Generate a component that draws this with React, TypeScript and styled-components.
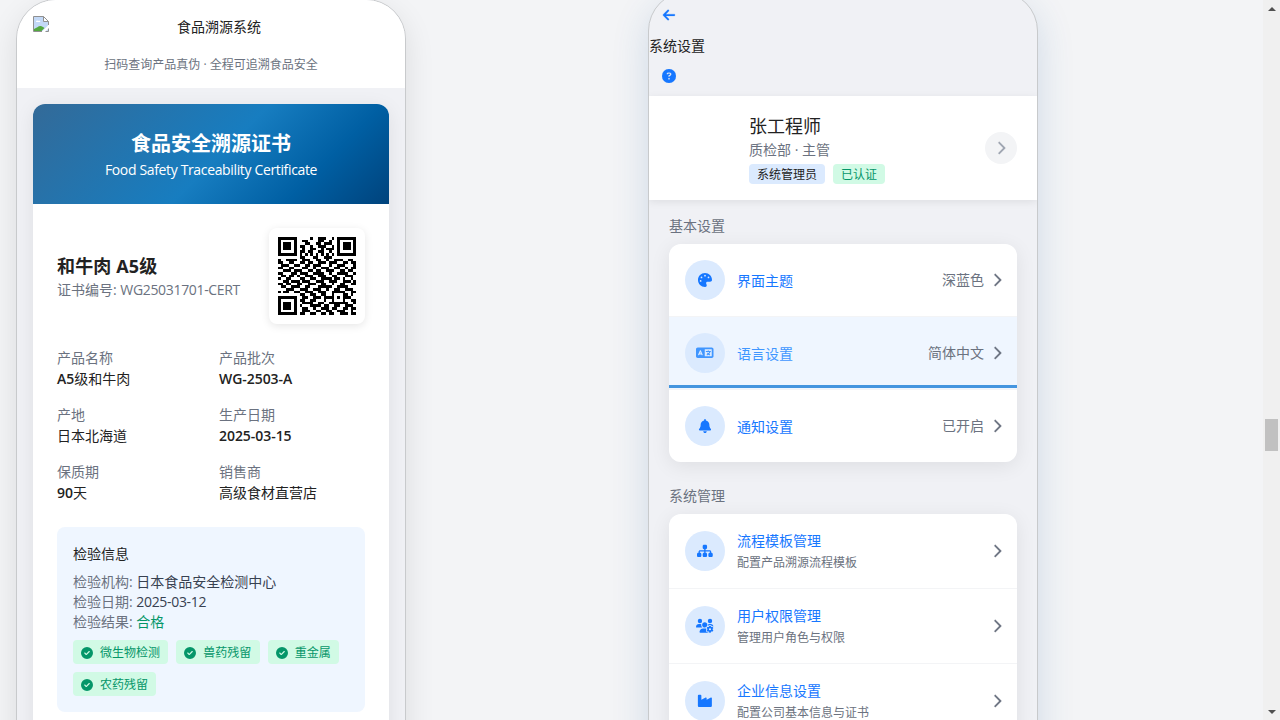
import React from 'react';
import styled, { createGlobalStyle, css } from 'styled-components';
import {
  FaArrowLeft, FaBell, FaChevronRight, FaCircleCheck, FaCircleQuestion,
  FaIndustry, FaLanguage, FaPalette, FaSitemap, FaUsersGear,
} from 'react-icons/fa6';

const GlobalStyle = createGlobalStyle`
  *, *::before, *::after { box-sizing: border-box; }
  html, body { margin: 0; height: 720px; overflow: hidden; }
  body {
    background: #f3f4f6;
    color: #222;
    font: 14px/20px "Open Sans", "Noto Sans CJK SC", sans-serif;
  }
  svg { display: block; flex: none; }
`;

const Page = styled.div`
  display: flex;
  height: 720px;
  overflow: hidden;
`;

const Canvas = styled.main`
  flex: 1;
  display: flex;
  align-items: flex-start;
  gap: 242px;
  padding-left: 16px;
  overflow: hidden;
`;

const Phone = styled.section<{ $lift: number; $active?: boolean }>`
  flex: none;
  width: 390px;
  height: 844px;
  margin-top: ${(p) => -p.$lift}px;
  overflow: hidden;
  border: 1px solid #c8cacc;
  border-radius: 40px;
  background: #f0f1f5;
  box-shadow: ${(p) => (p.$active
    ? '0 12px 36px rgba(35, 95, 160, 0.17)'
    : '0 10px 30px rgba(0, 0, 0, 0.1)')};
`;

const BrandHeader = styled.header`
  height: 88px;
  padding: 16px 16px 0;
  background: #fff;
`;

const BrandRow = styled.div`
  display: flex;
  height: 22px;
  margin-bottom: 17px;
`;

const BrandTitle = styled.div`
  flex: 1;
  text-align: center;
  line-height: 22px;
`;

const BrandHint = styled.div`
  text-align: center;
  font-size: 12px;
  line-height: 20px;
  color: #6b7280;
`;

const CertificateShade = styled.div`
  margin: 16px 16px 0;
  border-radius: 12px;
  box-shadow: 0 4px 20px rgba(0, 0, 0, 0.08);
`;

const Certificate = styled.article`
  height: 760px;
  overflow: hidden;
  border-radius: 12px;
  background: #fff;
`;

const Banner = styled.header`
  height: 100px;
  padding-top: 25px;
  text-align: center;
  color: #fff;
  background: linear-gradient(135deg, #336a98 0%, #177dc0 52%, #005fa3 77%, #00437c 100%);
`;

const BannerTitle = styled.h2`
  margin: 0;
  font-size: 20px;
  line-height: 29px;
  font-weight: 700;
`;

const BannerSub = styled.div`
  line-height: 24px;
  letter-spacing: -0.35px;
`;

const CertBody = styled.div`
  padding: 24px;
`;

const ProductRow = styled.div`
  display: flex;
  align-items: center;
  justify-content: space-between;
  height: 96px;
  margin-bottom: 24px;
`;

const ProductName = styled.h3`
  margin: 0;
  font-size: 18px;
  line-height: 28px;
  font-weight: 700;
  letter-spacing: 0.15px;
`;

const Muted = styled.span`
  color: #6b7280;
`;

const Latin = styled.span<{ $strong?: boolean }>`
  letter-spacing: -0.33px;
  ${(p) => p.$strong && css`
    font-weight: 600;
    letter-spacing: -0.05px;
  `}
`;

const QrFrame = styled.div`
  width: 96px;
  height: 96px;
  padding: 9px;
  border-radius: 8px;
  background: #fff;
  box-shadow: 0 2px 8px rgba(0, 0, 0, 0.1);
`;

const Facts = styled.dl`
  display: grid;
  grid-template-columns: 1fr 1fr;
  gap: 16px;
  margin: 0 0 24px;
`;

const Fact = styled.div`
  dt { line-height: 20px; color: #6b7280; }
  dd { margin: 0; line-height: 21px; }
`;

const Inspection = styled.section`
  height: 185px;
  padding: 16px;
  border-radius: 8px;
  background: #eff6ff;
`;

const InspectionTitle = styled.div`
  margin-bottom: 8px;
  line-height: 21px;
`;

const InspectionLine = styled.div<{ $ok?: boolean }>`
  color: ${(p) => (p.$ok ? '#059669' : '#374151')};
`;

const Checks = styled.div`
  display: flex;
  flex-wrap: wrap;
  gap: 8px;
  margin-top: 8px;
`;

const Check = styled.span`
  display: inline-flex;
  align-items: center;
  gap: 7px;
  height: 24px;
  padding: 1px 8.3px 0 8px;
  border-radius: 4px;
  background: #d1fae5;
  color: #059669;
  font-size: 12px;
  svg { width: 12px; height: 12px; }
`;

const NavIcon = styled.div`
  display: flex;
  align-items: center;
  justify-content: center;
  width: 40px;
  height: 32px;
  color: #1677ff;
  svg {
    width: 14px;
    height: 14px;
    stroke: currentColor;
    stroke-width: 8;
  }
`;

const NavBar = styled.header`
  height: 104px;
  padding-top: 7px;
`;

const NavTitle = styled.div`
  height: 29px;
  line-height: 30px;
`;

const Profile = styled.section`
  position: relative;
  display: flex;
  align-items: center;
  height: 104px;
  padding: 16px 20px;
  background: #fff;
  box-shadow: 0 2px 8px rgba(0, 0, 0, 0.08);
`;

const Avatar = styled.div`
  width: 64px;
  height: 64px;
  margin-right: 16px;
`;

const ProfileInfo = styled.div`
  flex: 1;
`;

const ProfileName = styled.div`
  font-size: 18px;
  line-height: 28px;
`;

const Badges = styled.div`
  display: flex;
  gap: 8px;
  margin-top: 4px;
`;

const Badge = styled.span<{ $green?: boolean }>`
  height: 20px;
  padding: 1px 8px 0;
  border-radius: 4px;
  font-size: 12px;
  line-height: 19px;
  background: ${(p) => (p.$green ? '#d1fae5' : '#dbeafe')};
  color: ${(p) => (p.$green ? '#059669' : '#222')};
`;

const RoundButton = styled.button`
  display: flex;
  align-items: center;
  justify-content: center;
  width: 32px;
  height: 32px;
  padding: 0;
  border: 0;
  border-radius: 50%;
  background: #f3f4f6;
  color: #9ca3af;
  svg {
    width: 14px;
    height: 14px;
    stroke: currentColor;
    stroke-width: 8;
  }
`;

const Group = styled.section`
  padding: 16px 20px 8px;
`;

const GroupTitle = styled.div`
  margin-bottom: 8px;
  color: #6b7280;
`;

const CardShade = styled.div`
  border-radius: 12px;
  box-shadow: 0 4px 20px rgba(0, 0, 0, 0.08);
`;

const Card = styled.div`
  border-radius: 12px;
  overflow: hidden;
  background: #fff;
`;

const Row = styled.div<{ $tall?: boolean; $selected?: boolean }>`
  position: relative;
  display: flex;
  align-items: center;
  height: ${(p) => (p.$tall ? 75 : 73)}px;
  padding: 0 16px;
  border-bottom: 1px solid #f3f4f6;
  color: #6b7280;
  &:last-child {
    height: ${(p) => (p.$tall ? 74 : 72)}px;
    border-bottom: 0;
  }
  ${(p) => p.$selected && css`
    background: #eff6ff;
    &::after {
      content: '';
      position: absolute;
      left: 0;
      right: 0;
      bottom: 1px;
      height: 3px;
      background: #4495df;
    }
  `}
`;

const RowIcon = styled.div<{ $dim?: boolean; $size: number }>`
  display: flex;
  align-items: center;
  justify-content: center;
  width: 40px;
  height: 40px;
  margin-right: 12px;
  border-radius: 50%;
  background: #dbeafe;
  color: ${(p) => (p.$dim ? '#4096ff' : '#1677ff')};
  svg {
    width: ${(p) => p.$size}px;
    height: ${(p) => p.$size}px;
  }
`;

const RowText = styled.div<{ $single?: boolean }>`
  flex: 1;
  padding-top: ${(p) => (p.$single ? 1 : 0)}px;
`;

const RowTitle = styled.div<{ $dim?: boolean }>`
  line-height: 21px;
  color: ${(p) => (p.$dim ? '#4096ff' : '#1677ff')};
`;

const RowNote = styled.div`
  padding-top: 1px;
  font-size: 12px;
  line-height: 21px;
`;

const RowArrow = styled.span`
  display: flex;
  justify-content: center;
  width: 9px;
  margin-left: 8px;
  svg {
    width: 14px;
    height: 14px;
    stroke: currentColor;
    stroke-width: 8;
  }
`;

const ScrollTrack = styled.aside`
  flex: none;
  display: flex;
  flex-direction: column;
  align-items: center;
  justify-content: space-between;
  width: 17px;
  height: 720px;
  padding: 7px 0 6px;
  background: #f0f0f0;
`;

const ScrollArrow = styled.i<{ $down?: boolean }>`
  width: 0;
  height: 0;
  border: 4px solid transparent;
  border-top: ${(p) => (p.$down ? '4px solid #505050' : '0')};
  border-bottom: ${(p) => (p.$down ? '0' : '4px solid #505050')};
`;

const ScrollThumb = styled.div`
  width: 13px;
  height: 32px;
  margin-top: 408px;
  margin-bottom: auto;
  background: #c1c1c1;
`;

const QR_ROWS = [
  '11111110000010011100101111111',
  '10000010011000011001001000001',
  '10111010001100110111001011101',
  '10111010110010011100101011101',
  '10111010010011001011101011101',
  '10000010110110011001001000001',
  '11111110101010101010101111111',
  '00000000110001100111000000000',
  '10011110011100110010011100110',
  '11001100110110011101110011011',
  '01110011001101110001001110001',
  '11001100011001001110011001011',
  '00111011100110110011100110110',
  '11000110111001111001001111001',
  '01101101001110011100110001110',
  '10011000110011001111011010010',
  '00110111011100111001110011101',
  '11011001100111001100100110011',
  '01100111001100011111001111000',
  '00011100111001110010011001110',
  '10110011001110011100111110011',
  '00000000110011001100100011010',
  '11111110011001110111101011100',
  '10000010110011000100100010011',
  '10111010011110011001111111001',
  '10111010100011110110011001110',
  '10111010011001001110110011011',
  '10000010011100110011001110010',
  '11111110110011001101100111011',
];

function QrCode() {
  return (
    <svg width="78" height="78" viewBox="0 0 29 29" shapeRendering="crispEdges">
      {QR_ROWS.map((row, y) => [...row].map((cell, x) => (
        cell === '1' ? <rect key={`${x}-${y}`} x={x} y={y} width="1" height="1" /> : null
      )))}
    </svg>
  );
}

function MissingImage() {
  return (
    <svg width="16" height="16" viewBox="0 0 16 16">
      <path d="M.5.5h10l5 5v10H.5z" fill="#c3d9f7" />
      <path d="M3 6c0-1.5 1.5-2 2.2-1 1.2-.6 2.2 0 2.1 1z" fill="#fff" />
      <path d="M1 15v-2c3-1 4-3 6.5-3 1.5 0 2.5 1 4 2l-3 3z" fill="#53a93f" />
      <path d="M8.5 16 16 8.5V12l-4 4z" fill="#fff" />
      <path d="M10.5.5v5h5" fill="#fff" stroke="#909090" />
      <path d="M9 15.5H.5V.5h10l5 5V9M12.5 15.5h3v-3" fill="none" stroke="#909090" />
    </svg>
  );
}

const facts: { label: string; value: React.ReactNode }[] = [
  { label: '产品名称', value: <><Latin $strong>A5</Latin>级和牛肉</> },
  { label: '产品批次', value: <Latin $strong>WG-2503-A</Latin> },
  { label: '产地', value: '日本北海道' },
  { label: '生产日期', value: <Latin $strong>2025-03-15</Latin> },
  { label: '保质期', value: <><Latin $strong>90</Latin>天</> },
  { label: '销售商', value: '高级食材直营店' },
];

const checks = ['微生物检测', '兽药残留', '重金属', '农药残留'];

const basics = [
  { icon: <FaPalette />, size: 14, title: '界面主题', value: '深蓝色' },
  { icon: <FaLanguage />, size: 17.5, title: '语言设置', value: '简体中文', selected: true },
  { icon: <FaBell />, size: 14, title: '通知设置', value: '已开启' },
];

const management = [
  { icon: <FaSitemap />, size: 15.75, title: '流程模板管理', note: '配置产品溯源流程模板' },
  { icon: <FaUsersGear />, size: 17.5, title: '用户权限管理', note: '管理用户角色与权限' },
  { icon: <FaIndustry />, size: 15.75, title: '企业信息设置', note: '配置公司基本信息与证书' },
];

function TracePhone() {
  return (
    <Phone $lift={1}>
      <BrandHeader>
        <BrandRow>
          <MissingImage />
          <BrandTitle>食品溯源系统</BrandTitle>
        </BrandRow>
        <BrandHint>扫码查询产品真伪 · 全程可追溯食品安全</BrandHint>
      </BrandHeader>
      <CertificateShade>
        <Certificate>
          <Banner>
            <BannerTitle>食品安全溯源证书</BannerTitle>
            <BannerSub>Food Safety Traceability Certificate</BannerSub>
          </Banner>
          <CertBody>
            <ProductRow>
              <div>
                <ProductName>和牛肉 A5级</ProductName>
                <Muted>证书编号: <Latin>WG25031701-CERT</Latin></Muted>
              </div>
              <QrFrame><QrCode /></QrFrame>
            </ProductRow>
            <Facts>
              {facts.map((f) => (
                <Fact key={f.label}><dt>{f.label}</dt><dd>{f.value}</dd></Fact>
              ))}
            </Facts>
            <Inspection>
              <InspectionTitle>检验信息</InspectionTitle>
              <InspectionLine><Muted>检验机构:</Muted> 日本食品安全检测中心</InspectionLine>
              <InspectionLine><Muted>检验日期:</Muted> <Latin>2025-03-12</Latin></InspectionLine>
              <InspectionLine $ok><Muted>检验结果:</Muted> 合格</InspectionLine>
              <Checks>
                {checks.map((c) => <Check key={c}><FaCircleCheck />{c}</Check>)}
              </Checks>
            </Inspection>
          </CertBody>
        </Certificate>
      </CertificateShade>
    </Phone>
  );
}

function SettingsPhone() {
  return (
    <Phone $lift={9} $active>
      <NavBar>
        <NavIcon><FaArrowLeft /></NavIcon>
        <NavTitle>系统设置</NavTitle>
        <NavIcon><FaCircleQuestion /></NavIcon>
      </NavBar>
      <Profile>
        <Avatar />
        <ProfileInfo>
          <ProfileName>张工程师</ProfileName>
          <Muted>质检部 · 主管</Muted>
          <Badges>
            <Badge>系统管理员</Badge>
            <Badge $green>已认证</Badge>
          </Badges>
        </ProfileInfo>
        <RoundButton><FaChevronRight /></RoundButton>
      </Profile>
      <Group>
        <GroupTitle>基本设置</GroupTitle>
        <CardShade>
          <Card>
            {basics.map((r) => (
              <Row key={r.title} $selected={r.selected}>
                <RowIcon $dim={r.selected} $size={r.size}>{r.icon}</RowIcon>
                <RowText $single><RowTitle $dim={r.selected}>{r.title}</RowTitle></RowText>
                {r.value}
                <RowArrow><FaChevronRight /></RowArrow>
              </Row>
            ))}
          </Card>
        </CardShade>
      </Group>
      <Group>
        <GroupTitle>系统管理</GroupTitle>
        <CardShade>
          <Card>
            {management.map((r) => (
              <Row key={r.title} $tall>
                <RowIcon $size={r.size}>{r.icon}</RowIcon>
                <RowText>
                  <RowTitle>{r.title}</RowTitle>
                  <RowNote>{r.note}</RowNote>
                </RowText>
                <RowArrow><FaChevronRight /></RowArrow>
              </Row>
            ))}
          </Card>
        </CardShade>
      </Group>
    </Phone>
  );
}

export default function App() {
  return (
    <>
      <GlobalStyle />
      <Page>
        <Canvas>
          <TracePhone />
          <SettingsPhone />
        </Canvas>
        <ScrollTrack>
          <ScrollArrow />
          <ScrollThumb />
          <ScrollArrow $down />
        </ScrollTrack>
      </Page>
    </>
  );
}
